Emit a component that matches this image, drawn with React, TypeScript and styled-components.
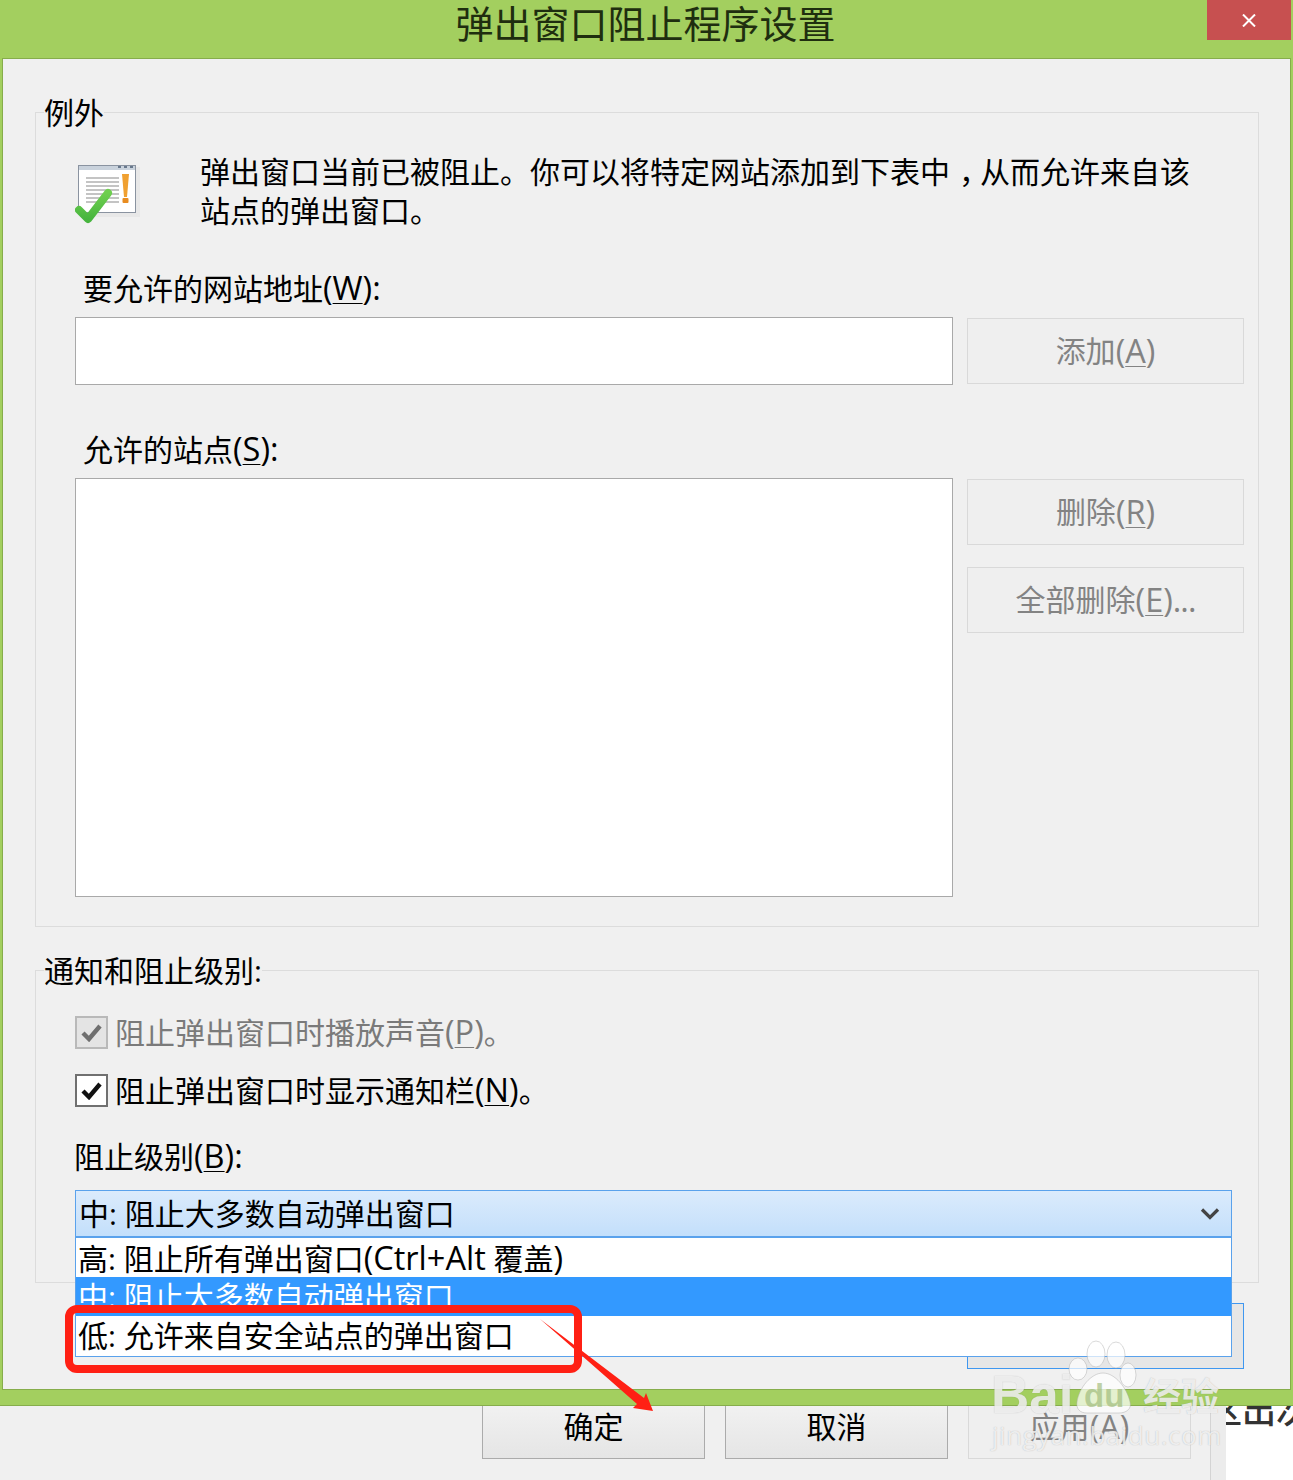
import styled, { createGlobalStyle } from 'styled-components';

const GlobalStyle = createGlobalStyle`
  html, body {
    margin: 0;
    padding: 0;
    background: #f0f0f0;
  }
  body {
    font-family: "Open Sans", "Noto Sans CJK SC", sans-serif;
    font-size: 30px;
    color: #000;
  }
`;

const Page = styled.div`
  position: relative;
  width: 1293px;
  height: 1480px;
  overflow: hidden;
  display: flex;
  flex-direction: column;
  line-height: 40px;
`;

const DialogWindow = styled.div`
  height: 1406px;
  flex: none;
  display: flex;
  flex-direction: column;
  background: #a3cf5f;
  border-bottom: 1px solid #86ad4b;
  box-sizing: border-box;
  padding: 0 2px 15px 2px;
`;

const TitleBar = styled.div`
  position: relative;
  height: 58px;
  flex: none;
  display: flex;
  justify-content: center;
  align-items: center;
  font-size: 38px;
  color: #1f2e0f;
  padding: 0 2px 12px 0;
  box-sizing: border-box;
`;

const CloseButton = styled.div`
  position: absolute;
  top: 0;
  right: 0;
  width: 84px;
  height: 40px;
  background: #c75050;
  display: flex;
  align-items: center;
  justify-content: center;
`;

const Panel = styled.div`
  flex: 1;
  background: #f0f0f0;
  border: 1px solid #86ad4b;
  box-sizing: border-box;
  display: flex;
  flex-direction: column;
  padding: 53px 31px 0 32px;
`;

const Group = styled.section<{ $height: number; $top?: number }>`
  position: relative;
  height: ${(p) => p.$height}px;
  margin-top: ${(p) => p.$top ?? 0}px;
  flex: none;
  box-sizing: border-box;
  border: 1px solid #dcdcdc;
`;

const Legend = styled.div`
  position: absolute;
  left: 8px;
  top: -20px;
  background: #f0f0f0;
  height: 40px;
`;

const ExceptionBody = styled.div`
  display: flex;
  flex-direction: column;
  padding: 39px 14px 0 39px;
`;

const Intro = styled.div`
  display: flex;
  height: 80px;
`;

const IntroIcon = styled.div`
  width: 125px;
  flex: none;
  padding-top: 11px;
`;

const IntroText = styled.p`
  margin: 0;
  width: 1000px;
  line-height: 39px;
`;

const CenteredComma = styled.span`
  display: inline-block;
  transform: translateX(9px);
`;

const Latin = styled.span`
  font-size: 32.5px;
`;

const Dots = styled.span`
  letter-spacing: -1px;
`;

const FieldLabel = styled.div<{ $top: number }>`
  padding-left: 8px;
  margin-top: ${(p) => p.$top}px;
  height: 49px;
  line-height: 40px;
`;

const Row = styled.div`
  display: flex;
  gap: 14px;
  align-items: flex-start;
`;

const WhiteBox = styled.div<{ $height: number }>`
  width: 878px;
  height: ${(p) => p.$height}px;
  flex: none;
  box-sizing: border-box;
  background: #fff;
  border: 1px solid #a9a9a9;
`;

const SideButtons = styled.div`
  display: flex;
  flex-direction: column;
  gap: 22px;
  padding-top: 1px;
`;

const GrayButton = styled.div`
  width: 277px;
  height: 66px;
  box-sizing: border-box;
  border: 1px solid #d9d9d9;
  background: #efefef;
  color: #838383;
  display: flex;
  align-items: center;
  justify-content: center;
  white-space: pre;
`;

const Underlined = styled.span`
  text-decoration: underline;
  text-decoration-thickness: 1px;
  text-underline-offset: 3px;
`;

const LevelBody = styled.div`
  display: flex;
  flex-direction: column;
  padding: 41px 26px 0 39px;
`;

const CheckRow = styled.div<{ $disabled?: boolean }>`
  display: flex;
  align-items: center;
  gap: 7px;
  height: 40px;
  margin-bottom: 18px;
  color: ${(p) => (p.$disabled ? '#7a7a7a' : '#000')};
`;

const CheckBox = styled.div<{ $disabled?: boolean }>`
  width: 33px;
  height: 33px;
  flex: none;
  box-sizing: border-box;
  display: flex;
  align-items: center;
  justify-content: center;
  border: 2px solid ${(p) => (p.$disabled ? '#b9b9b9' : '#707070')};
  background: ${(p) => (p.$disabled ? '#e4e4e4' : '#fff')};
`;

const LevelLabel = styled.div`
  height: 40px;
  margin-top: 8px;
  margin-left: -1px;
`;

const Combo = styled.div`
  position: relative;
  margin-top: 14px;
  height: 48px;
  box-sizing: border-box;
  border: 1px solid #5aa2ec;
  border-bottom-width: 2px;
  background: linear-gradient(#dbebfc, #c3dffb);
  padding: 0 11px 0 3px;
  display: flex;
  align-items: center;
  justify-content: space-between;
`;

const DropList = styled.div`
  position: absolute;
  left: -1px;
  right: -1px;
  top: 47px;
  height: 119px;
  box-sizing: border-box;
  background: #fff;
  border: 1px solid #5aa2ec;
  border-top: 0;
  overflow: hidden;
  z-index: 2;
`;

const DropItem = styled.div<{ $selected?: boolean }>`
  height: 39px;
  line-height: 40px;
  padding-left: 2px;
  overflow: hidden;
  background: ${(p) => (p.$selected ? '#3399ff' : 'transparent')};
  color: ${(p) => (p.$selected ? '#fff' : '#000')};
`;

const PanelFooter = styled.div`
  display: flex;
  justify-content: flex-end;
  padding: 20px 15px 0 0;
`;

const DefaultButton = styled.div`
  width: 277px;
  height: 66px;
  box-sizing: border-box;
  border: 1px solid #3f97f0;
  background: #e6e6e6;
`;

const BottomStrip = styled.div`
  flex: 1;
  display: flex;
  background: #f0f0f0;
`;

const ActionButtons = styled.div`
  display: flex;
  gap: 20px;
  padding-left: 482px;
  width: 710px;
  flex: none;
`;

const ActionButton = styled.div<{ $disabled?: boolean }>`
  width: 223px;
  height: 53px;
  box-sizing: border-box;
  border: 1px solid ${(p) => (p.$disabled ? '#d9d9d9' : '#ababab')};
  border-top: 0;
  background: ${(p) => (p.$disabled ? '#efefef' : 'linear-gradient(#f1f1f1, #e5e5e5)')};
  color: ${(p) => (p.$disabled ? '#838383' : '#000')};
  display: flex;
  align-items: center;
  justify-content: center;
  padding-bottom: 10px;
`;

const SideGutter = styled.div`
  margin-left: 18px;
  width: 15px;
  flex: none;
  background: #ececec;
  border-left: 1px solid #d4d4d4;
`;

const BehindPage = styled.div`
  flex: 1;
  background: #fff;
  overflow: hidden;
  height: 74px;
`;

const BehindText = styled.div`
  margin: -18px 0 0 -18px;
  font-size: 34px;
  font-weight: 500;
  line-height: 44px;
  color: #333;
  white-space: nowrap;
`;

const AnnotationLayer = styled.svg`
  position: absolute;
  left: 0;
  top: 0;
  z-index: 3;
  pointer-events: none;
`;

const Watermark = styled.div`
  position: absolute;
  left: 990px;
  top: 1340px;
  width: 240px;
  height: 115px;
  z-index: 4;
  color: rgba(255, 255, 255, 0.75);
  text-shadow: 0 0 1px rgba(130, 130, 130, 0.55);
  pointer-events: none;
`;

const WatermarkPaw = styled.svg`
  position: absolute;
  left: 0;
  top: 0;
`;

const WatermarkBai = styled.span`
  position: absolute;
  left: 1px;
  top: 20px;
  font: bold 53px/70px "Liberation Sans", sans-serif;
`;

const WatermarkDu = styled.span`
  position: absolute;
  left: 94px;
  top: 36px;
  font: bold 33px/40px "Liberation Sans", sans-serif;
  color: rgba(150, 180, 110, 0.6);
  text-shadow: none;
`;

const WatermarkCn = styled.span`
  position: absolute;
  left: 153px;
  top: 31px;
  font: bold 38px/46px "Noto Sans CJK SC", sans-serif;
`;

const WatermarkUrl = styled.span`
  position: absolute;
  left: 2px;
  top: 78px;
  font: 26px/34px "Open Sans", sans-serif;
  letter-spacing: 0.5px;
  white-space: nowrap;
`;

const AlertIcon = () => (
  <svg width="66" height="64" viewBox="0 0 66 64">
    <defs>
      <linearGradient id="tick" x1="0" y1="0" x2="0" y2="1">
        <stop offset="0" stopColor="#6fcf4f" />
        <stop offset="1" stopColor="#47b53e" />
      </linearGradient>
    </defs>
    <rect x="5" y="4" width="60" height="50" fill="#e2e2e2" opacity="0.6" />
    <rect x="3.5" y="2.500" width="57" height="47" fill="#fff" stroke="#8a93a0" />
    <rect x="4" y="3" width="56" height="4" fill="#c9d2dc" />
    <rect x="43" y="3" width="3" height="2" fill="#68788c" />
    <rect x="49" y="3" width="3" height="2" fill="#68788c" />
    <rect x="55" y="3" width="3" height="2" fill="#68788c" />
    <g fill="#c4c4c4">
      <rect x="11" y="14" width="33" height="2" />
      <rect x="11" y="18" width="33" height="2" />
      <rect x="11" y="22" width="33" height="2" />
      <rect x="11" y="26" width="33" height="2" />
      <rect x="11" y="30" width="33" height="2" />
      <rect x="11" y="34" width="33" height="2" />
      <rect x="11" y="38" width="33" height="2" />
    </g>
    <path d="M47 11h7l-2 23h-3z" fill="#f0a030" />
    <rect x="47.500" y="35" width="6" height="5" rx="1" fill="#e88c20" />
    <path d="M4 47l9 9 20-26" fill="none" stroke="url(#tick)" strokeWidth="8" strokeLinejoin="round" strokeLinecap="round" />
  </svg>
);

const Tick = ({ color }: { color: string }) => (
  <svg width="21" height="19" viewBox="0 0 21 19">
    <path d="M2 10l6 6L19 3" fill="none" stroke={color} strokeWidth="4.400" />
  </svg>
);

const App = () => (
  <Page>
    <GlobalStyle />
    <DialogWindow>
      <TitleBar>
        弹出窗口阻止程序设置
        <CloseButton>
          <svg width="14" height="13" viewBox="0 0 14 13">
            <path d="M1 0.5l12 12M13 0.5l-12 12" stroke="#fff" strokeWidth="2" />
          </svg>
        </CloseButton>
      </TitleBar>
      <Panel>
        <Group $height={815}>
          <Legend>例外</Legend>
          <ExceptionBody>
            <Intro>
              <IntroIcon>
                <AlertIcon />
              </IntroIcon>
              <IntroText>
                弹出窗口当前已被阻止。你可以将特定网站添加到下表中<CenteredComma>，</CenteredComma>从而允许来自该站点的弹出窗口。
              </IntroText>
            </Intro>
            <FieldLabel $top={36}>
              要允许的网站地址<Latin>(<Underlined>W</Underlined>):</Latin>
            </FieldLabel>
            <Row>
              <WhiteBox $height={68} />
              <SideButtons>
                <GrayButton>
                  添加<Latin>(<Underlined>A</Underlined>)</Latin>
                </GrayButton>
              </SideButtons>
            </Row>
            <FieldLabel $top={44}>
              允许的站点<Latin>(<Underlined>S</Underlined>):</Latin>
            </FieldLabel>
            <Row>
              <WhiteBox $height={419} />
              <SideButtons>
                <GrayButton>
                  删除<Latin>(<Underlined>R</Underlined>)</Latin>
                </GrayButton>
                <GrayButton>
                  全部删除<Latin>(<Underlined>E</Underlined>)<Dots>...</Dots></Latin>
                </GrayButton>
              </SideButtons>
            </Row>
          </ExceptionBody>
        </Group>
        <Group $height={313} $top={43}>
          <Legend>通知和阻止级别:</Legend>
          <LevelBody>
            <CheckRow $disabled>
              <CheckBox $disabled>
                <Tick color="#6f6f6f" />
              </CheckBox>
              <span>
                阻止弹出窗口时播放声音<Latin>(<Underlined>P</Underlined>)</Latin>。
              </span>
            </CheckRow>
            <CheckRow>
              <CheckBox>
                <Tick color="#111" />
              </CheckBox>
              <span>
                阻止弹出窗口时显示通知栏<Latin>(<Underlined>N</Underlined>)</Latin>。
              </span>
            </CheckRow>
            <LevelLabel>
              阻止级别<Latin>(<Underlined>B</Underlined>):</Latin>
            </LevelLabel>
            <Combo>
              <span>中: 阻止大多数自动弹出窗口</span>
              <svg width="20" height="14" viewBox="0 0 20 14">
                <path d="M2 2.500L10 10.500l8-8" fill="none" stroke="#444" strokeWidth="3.200" />
              </svg>
              <DropList>
                <DropItem>高: 阻止所有弹出窗口<Latin>(Ctrl+Alt</Latin> 覆盖<Latin>)</Latin></DropItem>
                <DropItem $selected>中: 阻止大多数自动弹出窗口</DropItem>
                <DropItem>低: 允许来自安全站点的弹出窗口</DropItem>
              </DropList>
            </Combo>
          </LevelBody>
        </Group>
        <PanelFooter>
          <DefaultButton />
        </PanelFooter>
      </Panel>
    </DialogWindow>
    <BottomStrip>
      <ActionButtons>
        <ActionButton>确定</ActionButton>
        <ActionButton>取消</ActionButton>
        <ActionButton $disabled>应用<Latin>(A)</Latin></ActionButton>
      </ActionButtons>
      <SideGutter />
      <BehindPage>
        <BehindText>区出次</BehindText>
      </BehindPage>
    </BottomStrip>

    <AnnotationLayer width="1293" height="1480" viewBox="0 0 1293 1480">
      <rect x="69" y="1309" width="509" height="60" rx="8" fill="none" stroke="#ff2014" strokeWidth="8" />
      <path d="M540 1319L644 1398l2-5 7 18-20-3 4-4z" fill="#ff2014" />
    </AnnotationLayer>

    <Watermark>
      <WatermarkPaw width="240" height="115" viewBox="0 0 240 115">
        <g fill="rgba(255,255,255,0.7)" stroke="rgba(170,170,170,0.45)">
          <ellipse cx="106" cy="14" rx="9" ry="13" />
          <ellipse cx="126" cy="15" rx="9" ry="13" />
          <ellipse cx="88" cy="29" rx="9" ry="11" />
          <ellipse cx="138" cy="35" rx="8" ry="12" />
          <path d="M87 62c2-14 14-29 26-29s24 15 27 29c2 7-4 11-11 11H97c-7 0-11-4-10-11z" />
        </g>
      </WatermarkPaw>
      <WatermarkBai>Bai</WatermarkBai>
      <WatermarkDu>du</WatermarkDu>
      <WatermarkCn>经验</WatermarkCn>
      <WatermarkUrl>jingyan.baidu.com</WatermarkUrl>
    </Watermark>
  </Page>
);

export default App;
